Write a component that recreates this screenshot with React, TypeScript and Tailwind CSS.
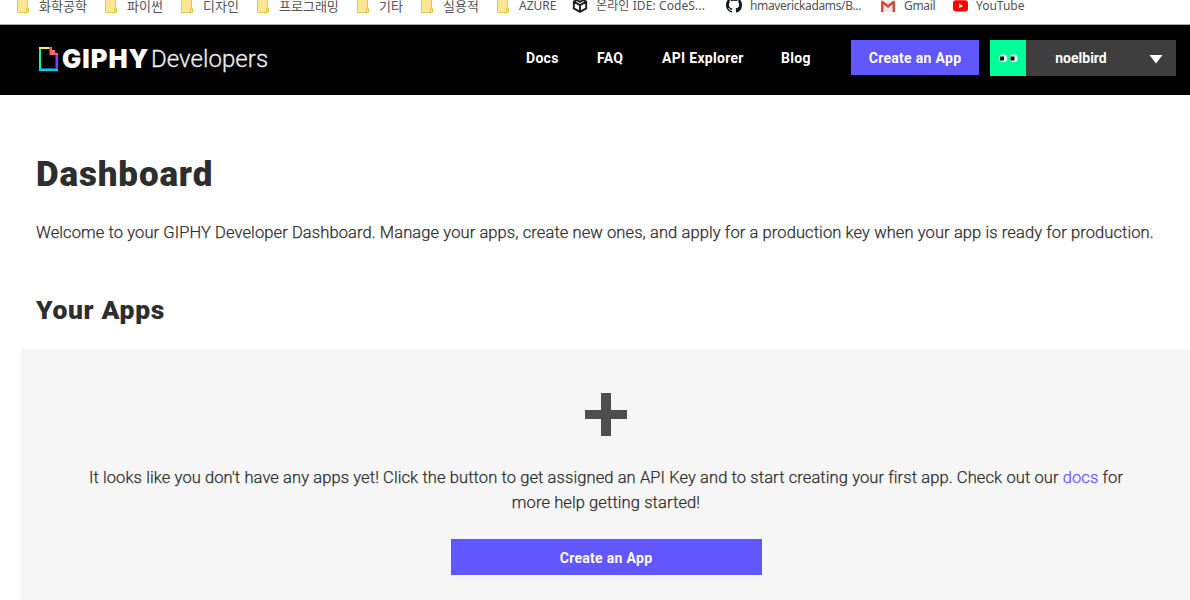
import type { ReactNode } from "react";

const FolderIcon = () => (
  <svg width="12" height="16" viewBox="0 0 12 16" className="shrink-0">
    <path d="M.5 0h10v11.500h1v4H.5z" fill="#ffe694" stroke="#e8c64b" />
    <path d="M9.500 15v-3.500h1.500" fill="none" stroke="#e8c64b" />
  </svg>
);

const CodeSandboxIcon = () => (
  <svg width="16" height="16" viewBox="0 0 16 16" fill="none" stroke="#1c1e20" strokeWidth="1.900" strokeLinejoin="round" className="shrink-0">
    <path d="M8 1.200 14.200 4.600v6.800L8 14.800 1.800 11.400V4.600zM2 4.800l6 3.300 6-3.300M8 8.100v6.500M5 3.200l3 1.700 3-1.700" />
  </svg>
);

const GithubIcon = () => (
  <svg width="16" height="16" viewBox="0 0 16 16" fill="#14171a" className="shrink-0">
    <path d="M8 0C3.580 0 0 3.580 0 8c0 3.540 2.290 6.530 5.470 7.590.4.070.55-.17.55-.38 0-.19-.01-.82-.01-1.490-2.010.37-2.530-.49-2.690-.94-.09-.23-.48-.94-.82-1.130-.28-.15-.68-.52-.01-.53.63-.01 1.080.58 1.230.82.72 1.210 1.870.87 2.330.66.070-.52.28-.87.51-1.070-1.780-.2-3.640-.89-3.640-3.950 0-.87.31-1.590.82-2.150-.08-.2-.36-1.020.08-2.120 0 0 .67-.21 2.200.82.64-.18 1.320-.27 2-.27s1.360.09 2 .27c1.530-1.040 2.200-.82 2.200-.82.44 1.100.16 1.920.08 2.120.51.56.82 1.270.82 2.150 0 3.070-1.870 3.750-3.650 3.950.29.25.54.73.54 1.480 0 1.070-.01 1.930-.01 2.200 0 .21.15.46.55.38A8 8 0 0 0 16 8c0-4.420-3.580-8-8-8z" />
  </svg>
);

const GmailIcon = () => (
  <svg width="14" height="16" viewBox="0 0 14 16" className="shrink-0">
    <path d="M1 4h12v11H1z" fill="#eceaea" />
    <path d="M0 5q0-1.500 1.500-1.500L7 7.800l5.500-4.300Q14 3.500 14 5v9.500q0 .5-.5.5H11.500V7.500L7 11 2.500 7.500V15H.5q-.5 0-.5-.5z" fill="#d54b3d" />
  </svg>
);

const YoutubeIcon = () => (
  <svg width="15" height="16" viewBox="0 0 15 16" className="shrink-0">
    <rect x="0" y="3.300" width="15" height="11.200" rx="3" fill="#f00" />
    <path d="M6 6.500v4.800l4-2.400z" fill="#fff" />
  </svg>
);

const Bookmark = ({ icon, label, className }: { icon: ReactNode; label: string; className: string }) => (
  <div className={`flex shrink-0 items-center whitespace-nowrap ${className}`}>
    {icon}
    <span className="pt-0.5">{label}</span>
  </div>
);

const Bookmarks = () => (
  <div className="h-[25px] overflow-hidden border-b border-[#a3a8a8] bg-white pl-[17px] font-['Noto_Sans','Noto_Sans_CJK_KR',sans-serif] text-[12px] text-[#505458]">
    <div className="-mt-[3px] flex h-4 leading-4">
      <Bookmark icon={<FolderIcon />} label="화학공학" className="w-[88px] gap-2.5 text-[13px]" />
      <Bookmark icon={<FolderIcon />} label="파이썬" className="w-[76px] gap-2.5 text-[13px]" />
      <Bookmark icon={<FolderIcon />} label="디자인" className="w-[76px] gap-2.5 text-[13px]" />
      <Bookmark icon={<FolderIcon />} label="프로그래밍" className="w-[100px] gap-2.5 text-[13px]" />
      <Bookmark icon={<FolderIcon />} label="기타" className="w-16 gap-2.5 text-[13px]" />
      <Bookmark icon={<FolderIcon />} label="실용적" className="w-[76px] gap-2.5 text-[13px]" />
      <Bookmark icon={<FolderIcon />} label="AZURE" className="w-[75px] gap-2.5" />
      <Bookmark icon={<CodeSandboxIcon />} label="온라인 IDE: CodeS..." className="w-[154px] gap-2 tracking-[0.1px]" />
      <Bookmark icon={<GithubIcon />} label="hmaverickadams/B..." className="w-[155px] gap-2 tracking-[-0.37px]" />
      <Bookmark icon={<GmailIcon />} label="Gmail" className="w-[72px] gap-[9px] tracking-[-0.3px]" />
      <Bookmark icon={<YoutubeIcon />} label="YouTube" className="gap-2" />
    </div>
  </div>
);

const Logo = () => (
  <div className="flex w-[487px] items-center">
    <svg width="19" height="24" viewBox="0 0 19 24" className="mt-0.5 shrink-0">
      <path d="M0 0h10.500v2H0z" fill="#fff152" />
      <path d="M0 2h2v20H0z" fill="#00ff99" />
      <path d="M0 21.500h19V24H0z" fill="#00ccff" />
      <path d="M16.500 8H19v13.500h-2.500z" fill="#9933ff" />
      <path d="M10.500 0h2.500v3h3v3h3v2h-8.500z" fill="#ff6666" />
    </svg>
    <span className="mt-0.5 ml-1 w-[89px] whitespace-nowrap font-['Inter',sans-serif] text-[25.500px] leading-6 font-black tracking-[1px] text-white">GIPHY</span>
    <span className="mt-0.5 whitespace-nowrap text-[24px] leading-6 font-light tracking-[0.050px] text-[#eee] [-webkit-text-stroke:0.3px_#eee]">Developers</span>
  </div>
);

const Header = () => (
  <header className="flex h-[70px] items-center bg-black pb-[5px] pl-[39px] text-[14px] font-bold tracking-[0.3px] text-white">
    <Logo />
    <nav className="mt-0.5 flex">
      <a className="w-[71px]">Docs</a>
      <a className="w-[65px]">FAQ</a>
      <a className="w-[119px]">API Explorer</a>
      <a className="w-[70px]">Blog</a>
    </nav>
    <button className="mb-px h-[35px] w-32 bg-[#6157ff] pt-0.5 text-center">Create an App</button>
    <div className="ml-[11px] flex h-9 w-[186px] items-center bg-[#3e3e3e]">
      <svg width="36" height="36" viewBox="0 0 36 36" className="shrink-0">
        <path d="M0 0h36v36H0z" fill="#00ff99" />
        <rect x="9.500" y="14.500" width="7.500" height="7.500" rx="3" fill="#e9f5ef" />
        <rect x="20" y="14.500" width="7.500" height="7.500" rx="3" fill="#e9f5ef" />
        <path d="M10 16.500h4v4h-4zM20.500 16.500h4v4h-4z" fill="#111" />
      </svg>
      <span className="w-[110px] pt-0.5 text-center tracking-normal">noelbird</span>
      <svg width="14" height="9" viewBox="0 0 14 9" className="mt-1 ml-[13px]">
        <path d="M.5 0h13L7 8.500z" fill="#fff" />
      </svg>
    </div>
  </header>
);

export default function App() {
  return (
    <div className="h-[600px] overflow-hidden bg-white font-['Roboto',sans-serif] text-[#2e2e2e]">
      <Bookmarks />
      <Header />
      <main className="pt-[60px]">
        <h1 className="ml-9 text-[35px] leading-10 font-black tracking-[0.850px]">Dashboard</h1>
        <p className="mt-[25px] ml-9 text-[16.500px] leading-[25px] font-light tracking-[0.098px] whitespace-nowrap [-webkit-text-stroke:0.25px_#2e2e2e]">
          Welcome to your GIPHY Developer Dashboard. Manage your apps, create new ones, and apply for a production key when your app is ready for production.
        </p>
        <h2 className="mt-[49px] ml-9 text-[26.500px] leading-8 font-black tracking-[0.650px]">Your Apps</h2>
        <section className="mt-[23px] ml-[21px] flex h-[251px] flex-col items-center bg-[#f6f6f6] pt-11 pl-px text-center text-[16.500px] leading-[25px]">
          <svg width="42" height="43" viewBox="0 0 42 43">
            <path d="M16 0h10v17h16v9H26v17H16V26H0v-9h16z" fill="#4e4e4e" />
          </svg>
          <p className="mt-[29px] font-light tracking-[0.098px] whitespace-nowrap [-webkit-text-stroke:0.25px_currentColor]">
            It looks like you don't have any apps yet! Click the button to get assigned an API Key and to start creating your first app. Check out our <a className="text-[#6157ff] [-webkit-text-stroke-color:#6157ff]">docs</a> for
            <br />
            more help getting started!
          </p>
          <button className="mt-6 h-9 w-[311px] shrink-0 bg-[#6157ff] pt-0.5 text-[14px] font-bold tracking-[0.3px] text-white">Create an App</button>
        </section>
      </main>
    </div>
  );
}
